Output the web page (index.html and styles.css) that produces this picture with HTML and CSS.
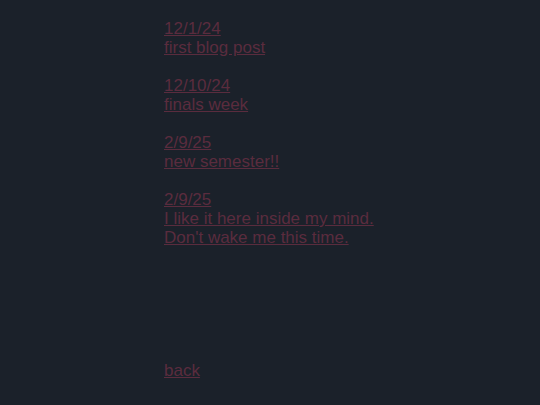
FILE: index.html
```html
<!DOCTYPE html>
<html>
<head>
<meta charset="utf-8">
<link rel="stylesheet" href="styles.css">
</head>
<body>
<main class="page">
  <ul class="posts">
    <li><a href="#">12/1/24<br>first blog post</a></li>
    <li><a href="#">12/10/24<br>finals week</a></li>
    <li><a href="#">2/9/25<br>new semester!!</a></li>
    <li><a href="#">2/9/25<br>I like it here inside my mind.<br>Don't wake me this time.</a></li>
  </ul>
  <a class="back" href="#">back</a>
</main>
</body>
</html>
```
FILE: styles.css
```css
html, body {
  margin: 0;
  padding: 0;
  background: #1b212a;
}
body {
  font-family: "Liberation Sans", Arial, sans-serif;
  font-size: 17px;
  line-height: 19px;
  color: #5a2c3e;
}
.page {
  padding: 19px 0 0 164px;
}
.posts {
  list-style: none;
  margin: 0;
  padding: 0;
  display: flex;
  flex-direction: column;
  gap: 19px;
}
a {
  color: #5a2c3e;
  text-decoration: underline;
}
.back {
  display: inline-block;
  margin-top: 114px;
}
```
